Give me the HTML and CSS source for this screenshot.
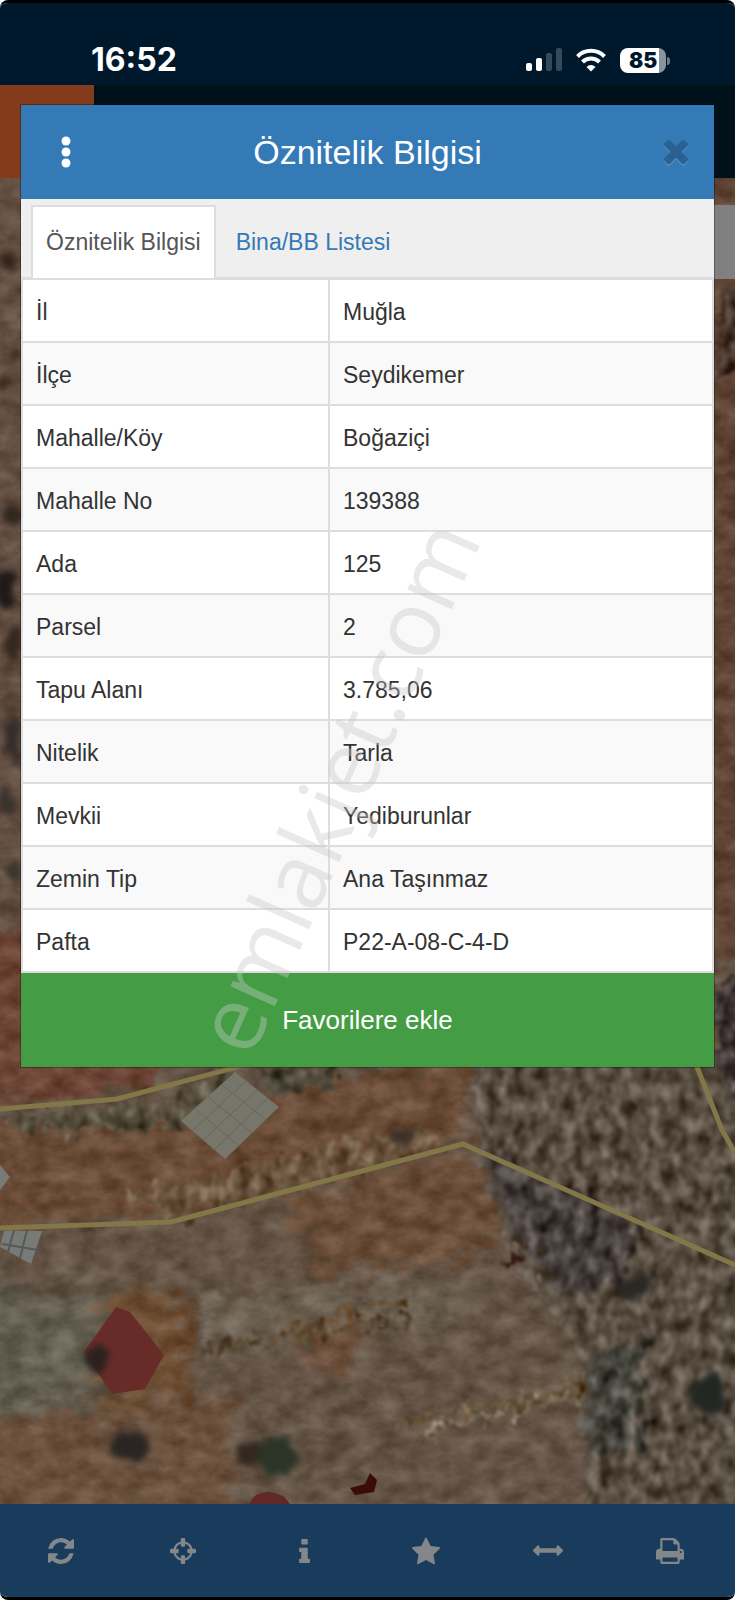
FILE: index.html
```html
<!DOCTYPE html>
<html lang="tr">
<head>
    <meta charset="UTF-8">
    <meta name="viewport" content="width=device-width, initial-scale=1.0">
    <title>Öznitelik Bilgisi</title>
    <link rel="stylesheet" href="styles.css">
</head>
<body>

<div class="screen">

    <div class="status-bar">
        <span class="time">16:52</span>
        <div class="status-icons">
            <svg width="36" height="24" viewBox="0 0 36 24">
                <rect x="0" y="15" width="6" height="8" rx="2" fill="#fff"/>
                <rect x="10" y="10" width="6" height="13" rx="2" fill="#fff"/>
                <rect x="20" y="5" width="6" height="18" rx="2" fill="#34495a"/>
                <rect x="30" y="0" width="6" height="23" rx="2" fill="#34495a"/>
            </svg>
            <svg width="30" height="24" viewBox="0 0 30 24" fill="none" stroke="#fff" stroke-width="4">
                <path d="M1.5 8.500a19 19 0 0 1 27 0"/>
                <path d="M6.500 14a12 12 0 0 1 17 0"/>
                <path d="M15 23.500l-4.500-4.600a6.500 6.500 0 0 1 9 0z" fill="#fff" stroke="none"/>
            </svg>
            <span class="battery">85</span>
        </div>
    </div>

    <div class="app-header">
        <div class="app-logo"></div>
    </div>

    <div class="map">
        <svg class="map-image" viewBox="0 178 735 1326" preserveAspectRatio="xMidYMin slice">
            <defs>
                <filter id="soil" x="0" y="0" width="1" height="1" color-interpolation-filters="sRGB">
                    <feTurbulence type="fractalNoise" baseFrequency="0.04 0.06" numOctaves="4" seed="4" result="n"/>
                    <feColorMatrix in="n" values="1 0 0 0 0  1 0 0 0 0  1 0 0 0 0  0 0 0 0 1" result="g"/>
                    <feGaussianBlur in="SourceGraphic" stdDeviation="5" result="s"/>
                    <feDisplacementMap in="s" in2="n" scale="50" xChannelSelector="R" yChannelSelector="G" result="d"/>
                    <feComposite in="d" in2="g" operator="arithmetic" k2="1" k3="0.24" k4="-0.12" result="m"/>
                    <feComposite in="m" in2="d" operator="in"/>
                </filter>
                <filter id="scrub" x="-0.1" y="-0.1" width="1.2" height="1.2" color-interpolation-filters="sRGB">
                    <feTurbulence type="fractalNoise" baseFrequency="0.08 0.06" numOctaves="3" seed="9" result="n"/>
                    <feColorMatrix in="n" values="1 0 0 0 0  1 0 0 0 0  1 0 0 0 0  0 0 0 0 1" result="g"/>
                    <feDisplacementMap in="SourceGraphic" in2="n" scale="40" xChannelSelector="R" yChannelSelector="G" result="d"/>
                    <feComposite in="d" in2="g" operator="arithmetic" k2="1" k3="0.56" k4="-0.27" result="m"/>
                    <feComposite in="m" in2="d" operator="in" result="c"/>
                    <feGaussianBlur in="c" stdDeviation="1.500"/>
                </filter>
                <filter id="trees" x="-0.1" y="-0.1" width="1.2" height="1.2" color-interpolation-filters="sRGB">
                    <feTurbulence type="fractalNoise" baseFrequency="0.06" numOctaves="2" seed="3" result="n"/>
                    <feDisplacementMap in="SourceGraphic" in2="n" scale="18" xChannelSelector="R" yChannelSelector="G" result="d"/>
                    <feGaussianBlur in="d" stdDeviation="3"/>
                </filter>
            </defs>

            <!-- fields -->
            <g filter="url(#soil)">
                <rect x="-40" y="140" width="820" height="1400" fill="#635446"/>
                <rect x="-40" y="140" width="110" height="960" fill="#634e42"/>
                <rect x="660" y="140" width="120" height="820" fill="#5f4335"/>
                <path d="M-40 930H160V1090L-40 1105z" fill="#6d4536"/>
                <path d="M-40 1130L200 1120 290 1080 465 1060 470 1140 170 1218-40 1225z" fill="#6b4d37"/>
                <path d="M285 1195L470 1150 515 1225 460 1260 310 1275z" fill="#6b4e39"/>
                <path d="M-40 1290L110 1290 90 1400-40 1420z" fill="#635e4f"/>
                <path d="M110 1290L190 1300 190 1400 100 1410z" fill="#6d4e33"/>
                <path d="M200 1300L480 1280 460 1320 210 1350z" fill="#6b6052"/>
                <path d="M290 1325L370 1320 360 1370 310 1370z" fill="#6b4f3b"/>
                <path d="M-40 1420L240 1390 240 1520-40 1520z" fill="#6a523f"/>
            </g>

            <!-- scrub -->
            <g filter="url(#scrub)">
                <path d="M10 1115L160 1105 230 1070 240 1100 170 1130 20 1130z" fill="#554d3c"/>
                <path d="M250 1068H350L330 1085 280 1095z" fill="#4c4638"/>
                <path d="M130 1195L430 1125 450 1145 170 1220z" fill="#675039"/>
                <path d="M470 1050H780V1530H585L580 1350 500 1230 480 1150z" fill="#554a3e"/>
                <path d="M480 1150L640 1220 620 1290 560 1290 510 1220z" fill="#443c39"/>
                <path d="M590 1360L640 1340 640 1450 590 1460z" fill="#42413a"/>
                <path d="M715 290H740V370L715 380z" fill="#473429"/>
                <path d="M715 980H740V1110L715 1060z" fill="#352b2a"/>
            </g>
            <g filter="url(#scrub)" fill="none" stroke-width="7">
                <path d="M290 1330L400 1305" stroke="#604326"/>
                <path d="M200 1350L290 1335 420 1320" stroke="#594832"/>
                <path d="M400 1425L580 1385" stroke="#665036"/>
                <path d="M420 1435L580 1393" stroke="#80705b"/>
                <path d="M500 1265L530 1250" stroke="#3c201b"/>
            </g>

            <!-- buildings and tarps -->
            <path d="M235 1072L279 1107 225 1159 181 1121z" fill="#77766a"/>
            <g stroke="#66665a" stroke-width="1">
                <path d="M208 1097L252 1133M222 1085L266 1120M195 1109L239 1146"/>
                <path d="M246 1081L192 1131M257 1090L203 1140M268 1098L214 1150"/>
            </g>
            <path d="M0 1165L10 1177 0 1190z M4 1231H42L31 1264 0 1247z" fill="#777a76"/>
            <path d="M14 1230L8 1252M27 1230L20 1258M2 1244L38 1250" stroke="#555a58" stroke-width="2"/>
            <path d="M116 1307L130 1312 164 1355 145 1389 112 1394 84 1352z" fill="#672c28"/>
            <path d="M250 1504Q252 1493 268 1492 284 1493 290 1504z" fill="#602927"/>
            <path d="M350 1488L365 1484 370 1473 377 1480 374 1492 355 1495z" fill="#3a0d0b"/>

            <!-- trees -->
            <g filter="url(#trees)">
                <ellipse cx="98" cy="1357" rx="11" ry="13" fill="#2b2220"/>
                <ellipse cx="130" cy="1446" rx="19" ry="15" fill="#2a2523"/>
                <ellipse cx="248" cy="1455" rx="13" ry="12" fill="#33281f"/>
                <ellipse cx="277" cy="1456" rx="20" ry="19" fill="#2b3427"/>
                <ellipse cx="708" cy="1394" rx="18" ry="20" fill="#232723"/>
                <ellipse cx="636" cy="1286" rx="15" ry="14" fill="#292824"/>
                <ellipse cx="403" cy="1135" rx="14" ry="9" fill="#3c3026"/>
                <ellipse cx="9" cy="262" rx="7" ry="9" fill="#33241b"/>
                <ellipse cx="17" cy="355" rx="5" ry="6" fill="#3a281e"/>
                <ellipse cx="4" cy="382" rx="6" ry="6" fill="#33241b"/>
                <ellipse cx="14" cy="516" rx="9" ry="9" fill="#33271f"/>
                <ellipse cx="6" cy="590" rx="10" ry="22" fill="#1f1a18"/>
                <ellipse cx="14" cy="642" rx="7" ry="16" fill="#33271f"/>
                <ellipse cx="14" cy="740" rx="8" ry="24" fill="#322d2a"/>
                <ellipse cx="6" cy="800" rx="7" ry="14" fill="#3a332e"/>
                <ellipse cx="14" cy="870" rx="8" ry="12" fill="#3b352c"/>
            </g>

            <!-- parcel borders -->
            <g fill="none" stroke="#817748" stroke-width="5">
                <path d="M0 1109L117 1099 234 1068 300 1040"/>
                <path d="M0 1228L171 1222 463 1144 735 1265"/>
                <path d="M690 1045L697 1067 722 1130 735 1153"/>
            </g>
        </svg>
        <div class="map-control"></div>
    </div>

    <div class="toolbar">
        <button type="button" aria-label="Yenile">
            <svg width="26" height="26" viewBox="0 0 1536 1536"><path d="M1511 928q0 5-1 7-64 268-268 434.500t-478 166.500q-146 0-282.500-55t-243.500-157l-129 129q-19 19-45 19t-45-19-19-45v-448q0-26 19-45t45-19h448q26 0 45 19t19 45-19 45l-137 137q71 66 161 102t187 36q134 0 250-65t186-179q11-17 53-117 8-23 30-23h192q13 0 22.500 9.500t9.500 22.500zm25-800v448q0 26-19 45t-45 19h-448q-26 0-45-19t-19-45 19-45l138-138q-148-137-349-137-134 0-250 65t-186 179q-11 17-53 117-8 23-30 23h-199q-13 0-22.500-9.500t-9.500-22.500v-7q65-268 270-434.500t480-166.500q146 0 284 55.500t245 156.500l130-129q19-19 45-19t45 19 19 45z"/></svg>
        </button>
        <button type="button" aria-label="Konum">
            <svg width="26" height="26" viewBox="0 0 1536 1536"><path d="M1197 896h-109q-26 0-45-19t-19-45v-128q0-26 19-45t45-19h109q-32-108-112.500-188.500t-188.500-112.500v109q0 26-19 45t-45 19h-128q-26 0-45-19t-19-45v-109q-108 32-188.500 112.500t-112.500 188.500h109q26 0 45 19t19 45v128q0 26-19 45t-45 19h-109q32 108 112.500 188.500t188.500 112.500v-109q0-26 19-45t45-19h128q26 0 45 19t19 45v109q108-32 188.500-112.500t112.500-188.500zm339-192v128q0 26-19 45t-45 19h-143q-37 161-154.500 278.500t-278.500 154.500v143q0 26-19 45t-45 19h-128q-26 0-45-19t-19-45v-143q-161-37-278.500-154.500t-154.500-278.500h-143q-26 0-45-19t-19-45v-128q0-26 19-45t45-19h143q37-161 154.500-278.500t278.500-154.500v-143q0-26 19-45t45-19h128q26 0 45 19t19 45v143q161 37 278.500 154.500t154.500 278.500h143q26 0 45 19t19 45z"/></svg>
        </button>
        <button type="button" aria-label="Bilgi">
            <svg width="11" height="24" viewBox="0 128 640 1408"><path d="M640 1344v128q0 26-19 45t-45 19h-512q-26 0-45-19t-19-45v-128q0-26 19-45t45-19h64v-384h-64q-26 0-45-19t-19-45v-128q0-26 19-45t45-19h384q26 0 45 19t19 45v576h64q26 0 45 19t19 45zm-128-1152v192q0 26-19 45t-45 19h-256q-26 0-45-19t-19-45v-192q0-26 19-45t45-19h256q26 0 45 19t19 45z"/></svg>
        </button>
        <button type="button" aria-label="Favoriler">
            <svg width="28" height="28" viewBox="0 0 1664 1664"><path d="M1664 647q0 22-26 48l-363 354 86 500q1 7 1 20 0 21-10.500 35.500t-30.500 14.500q-19 0-40-12l-449-236-449 236q-22 12-40 12-21 0-31.500-14.500t-10.500-35.500q0-6 2-20l86-500-364-354q-25-27-25-48 0-37 56-46l502-73 225-455q19-41 49-41t49 41l225 455 502 73q56 9 56 46z"/></svg>
        </button>
        <button type="button" aria-label="Ölçüm">
            <svg width="30" height="11" viewBox="0 -64 1792 640"><path d="M1792 256q0 26-19 45l-256 256q-19 19-45 19t-45-19-19-45v-128h-1024v128q0 26-19 45t-45 19-45-19l-256-256q-19-19-19-45t19-45l256-256q19-19 45-19t45 19 19 45v128h1024v-128q0-26 19-45t45-19 45 19l256 256q19 19 19 45z"/></svg>
        </button>
        <button type="button" aria-label="Yazdır">
            <svg width="28" height="26" viewBox="0 0 1664 1536"><path d="M384 1408h896v-256h-896v256zm0-640h896v-384h-160q-40 0-68-28t-28-68v-160h-640v640zm1152 64q0-26-19-45t-45-19-45 19-19 45 19 45 45 19 45-19 19-45zm128 0v416q0 13-9.500 22.500t-22.500 9.500h-224v160q0 40-28 68t-68 28h-960q-40 0-68-28t-28-68v-160h-224q-13 0-22.500-9.500t-9.500-22.500v-416q0-79 56.500-135.500t135.500-56.500h64v-544q0-40 28-68t68-28h672q40 0 88 20t76 48l152 152q28 28 48 76t20 88v256h64q79 0 135.500 56.500t56.500 135.500z"/></svg>
        </button>
    </div>

    <div class="modal">
        <div class="modal-header">
            <button type="button" class="menu-btn" aria-label="Menü">
                <svg width="10" height="32" viewBox="0 0 10 32" fill="#fff">
                    <circle cx="5" cy="5" r="4.500"/>
                    <circle cx="5" cy="16" r="4.500"/>
                    <circle cx="5" cy="27" r="4.500"/>
                </svg>
            </button>
            <h1>Öznitelik Bilgisi</h1>
            <button type="button" class="close-btn" aria-label="Kapat">
                <svg width="24" height="24" viewBox="110 366 1188 1188"><path d="M1298 1322q0 40-28 68l-136 136q-28 28-68 28t-68-28l-294-294-294 294q-28 28-68 28t-68-28l-136-136q-28-28-28-68t28-68l294-294-294-294q-28-28-28-68t28-68l136-136q28-28 68-28t68 28l294 294 294-294q28-28 68-28t68 28l136 136q28 28 28 68t-28 68l-294 294 294 294q28 28 28 68z"/></svg>
            </button>
        </div>

        <div class="tabs">
            <a href="#oznitelik" class="active">Öznitelik Bilgisi</a>
            <a href="#bina">Bina/BB Listesi</a>
        </div>

        <table id="oznitelik">
            <tr><th scope="row">İl</th><td>Muğla</td></tr>
            <tr><th scope="row">İlçe</th><td>Seydikemer</td></tr>
            <tr><th scope="row">Mahalle/Köy</th><td>Boğaziçi</td></tr>
            <tr><th scope="row">Mahalle No</th><td>139388</td></tr>
            <tr><th scope="row">Ada</th><td>125</td></tr>
            <tr><th scope="row">Parsel</th><td>2</td></tr>
            <tr><th scope="row">Tapu Alanı</th><td>3.785,06</td></tr>
            <tr><th scope="row">Nitelik</th><td>Tarla</td></tr>
            <tr><th scope="row">Mevkii</th><td>Yediburunlar</td></tr>
            <tr><th scope="row">Zemin Tip</th><td>Ana Taşınmaz</td></tr>
            <tr><th scope="row">Pafta</th><td>P22-A-08-C-4-D</td></tr>
        </table>

        <button type="button" class="favorite-btn">Favorilere ekle</button>
    </div>

    <div class="watermark"><span>emlakjet.com</span></div>
</div>

</body>
</html>
```
FILE: styles.css
```css
* {
    box-sizing: border-box;
}

body {
    margin: 0;
    background-color: #fff;
    color: #333;
    font-family: "Liberation Sans", Arial, sans-serif;
    font-size: 23px;
}

button {
    padding: 0;
    border: none;
    background: none;
    font: inherit;
    cursor: pointer;
}

svg {
    display: block;
}

.screen {
    position: relative;
    display: flex;
    flex-direction: column;
    min-height: 100vh;
    border-top: 3px solid #000;
    border-bottom: 3px solid #000;
    border-radius: 8px;
    overflow: hidden;
}

/* status bar */
.status-bar {
    display: flex;
    justify-content: space-between;
    align-items: flex-end;
    height: 82px;
    padding: 0 69px 8px 91px;
    background-color: #00182c;
    color: #fff;
    font-family: Inter, sans-serif;
}

.time {
    font-size: 32px;
    font-weight: 700;
    line-height: 34px;
}

.status-icons {
    display: flex;
    align-items: center;
    gap: 14px;
    height: 34px;
}

.battery {
    position: relative;
    width: 46px;
    height: 25px;
    border-radius: 8px;
    background: linear-gradient(to right, #fff 85%, #8a949c 85%);
    color: #00182c;
    font-size: 21px;
    font-weight: 900;
    line-height: 25px;
    text-align: center;
}

.battery::after {
    content: "";
    position: absolute;
    top: 9px;
    right: -4px;
    width: 3px;
    height: 8px;
    border-radius: 0 3px 3px 0;
    background-color: #6f7c86;
}

/* page behind the modal */
.app-header {
    height: 93px;
    background-color: #00111a;
}

.app-logo {
    width: 94px;
    height: 100%;
    background-color: #833b1c;
}

.map {
    position: relative;
    flex: 1;
    min-height: 1000px;
    background-color: #635446;
}

.map-image {
    position: absolute;
    width: 100%;
    height: 100%;
}

.map-control {
    position: absolute;
    top: 27px;
    right: 0;
    width: 90px;
    height: 74px;
    background-color: #808080;
}

.toolbar {
    display: grid;
    grid-template-columns: repeat(6, 1fr);
    height: 93px;
    padding-right: 4px;
    background-color: #1a3c5c;
}

.toolbar button {
    display: flex;
    justify-content: center;
    align-items: center;
}

.toolbar svg {
    fill: #84878a;
}

/* modal */
.modal {
    position: absolute;
    top: 102px;
    left: 21px;
    right: 21px;
    background-color: #fff;
    box-shadow: 0 0 0 1px rgba(0, 0, 0, 0.3);
}

.modal-header {
    display: flex;
    justify-content: space-between;
    align-items: center;
    height: 94px;
    padding: 0 26px 0 40px;
    background-color: #337ab7;
}

.modal-header h1 {
    margin: 0;
    color: #fff;
    font-size: 34px;
    font-weight: 400;
}

.close-btn svg {
    fill: #296292;
    filter: drop-shadow(0 2px 0 #5089bb);
}

.tabs {
    display: flex;
    gap: 5px;
    height: 81px;
    padding: 6px 10px 0;
    background-color: #efefef;
    border-bottom: 3px solid #ddd;
}

.tabs a {
    height: 73px;
    padding: 0 13px;
    border: 2px solid transparent;
    border-bottom: none;
    color: #337ab7;
    line-height: 70px;
    text-decoration: none;
}

.tabs .active {
    background-color: #fff;
    border-color: #ddd;
    color: #555;
}

table {
    width: 100%;
    border-collapse: separate;
    border-spacing: 0;
    border-right: 2px solid #ddd;
    border-left: 2px solid #ddd;
}

th,
td {
    height: 63px;
    padding: 3px 13px 0;
    border-bottom: 2px solid #ddd;
    font-weight: 400;
    text-align: left;
}

th {
    width: 307px;
    border-right: 2px solid #ddd;
}

tr:nth-child(even) {
    background-color: #f9f9f9;
}

.favorite-btn {
    display: block;
    width: 100%;
    height: 94px;
    background-color: #449d44;
    color: #fff;
    font-size: 26px;
}

.watermark {
    position: absolute;
    inset: 0;
    display: flex;
    justify-content: center;
    align-items: center;
    color: rgba(200, 200, 200, 0.4);
    font-family: "Open Sans", sans-serif;
    font-size: 91px;
    pointer-events: none;
}

.watermark span {
    padding-bottom: 72px;
    transform: rotate(-66deg);
}
```
